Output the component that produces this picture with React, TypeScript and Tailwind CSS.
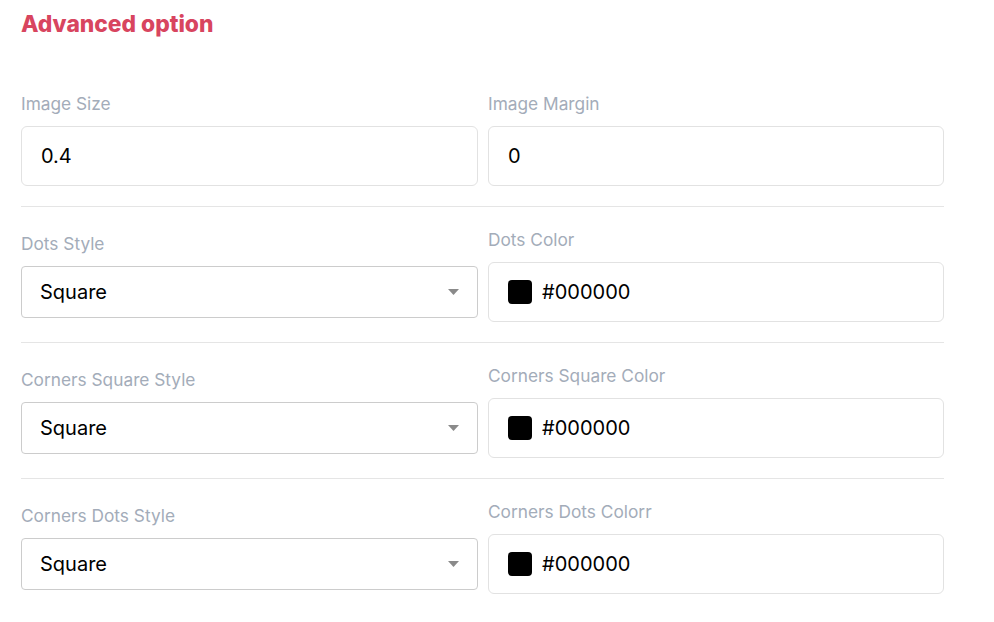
import React from 'react';

type Field =
  | { kind: 'input'; label: string; value: string }
  | { kind: 'select'; label: string; value: string }
  | { kind: 'color'; label: string; value: string };

const rows: Field[][] = [
  [
    { kind: 'input', label: 'Image Size', value: '0.4' },
    { kind: 'input', label: 'Image Margin', value: '0' },
  ],
  [
    { kind: 'select', label: 'Dots Style', value: 'Square' },
    { kind: 'color', label: 'Dots Color', value: '#000000' },
  ],
  [
    { kind: 'select', label: 'Corners Square Style', value: 'Square' },
    { kind: 'color', label: 'Corners Square Color', value: '#000000' },
  ],
  [
    { kind: 'select', label: 'Corners Dots Style', value: 'Square' },
    { kind: 'color', label: 'Corners Dots Colorr', value: '#000000' },
  ],
];

function FieldBox({ field }: { field: Field }) {
  return (
    <div className="flex flex-col">
      <label className="mb-[10px] pt-[1px] text-[17.3px] leading-[24px] text-[#a3acb9]">{field.label}</label>
      {field.kind === 'input' && (
        <div className="flex h-[60px] items-center rounded-[6px] border border-[#e2e2e2] px-[19px] text-[20px] text-black">
          {field.value}
        </div>
      )}
      {field.kind === 'select' && (
        <div className="flex h-[52px] items-center justify-between rounded-[4px] border border-[#cccccc] pl-[18px] pr-[18px] text-[20px] text-black">
          <span>{field.value}</span>
          <svg width="11" height="6" viewBox="0 0 11 6">
            <path d="M0 0h11L5.5 6z" fill="#8a8a8a" />
          </svg>
        </div>
      )}
      {field.kind === 'color' && (
        <div className="flex h-[60px] items-center gap-[10px] rounded-[6px] border border-[#e2e2e2] px-[19px] text-[20px] text-black">
          <span className="h-[24px] w-[24px] rounded-[4px] bg-black" />
          <span>{field.value}</span>
        </div>
      )}
    </div>
  );
}

function App() {
  return (
    <div className="min-h-screen bg-white font-['Inter',sans-serif]">
      <div className="ml-[21px] w-[923px] pt-[7px]">
        <h2 className="text-[22.8px] font-extrabold leading-[34px] text-[#d8455f]">Advanced option</h2>
        <div className="mt-[30px]">
          {rows.map((row, i) => (
            <div key={i} className={i > 0 ? 'border-t border-[#e5e5e5]' : ''}>
              <div className="grid grid-cols-[457px_456px] items-center gap-x-[10px] py-[20px]">
                {row.map(field => (
                  <FieldBox key={field.label} field={field} />
                ))}
              </div>
            </div>
          ))}
        </div>
      </div>
    </div>
  );
}

export default App;
